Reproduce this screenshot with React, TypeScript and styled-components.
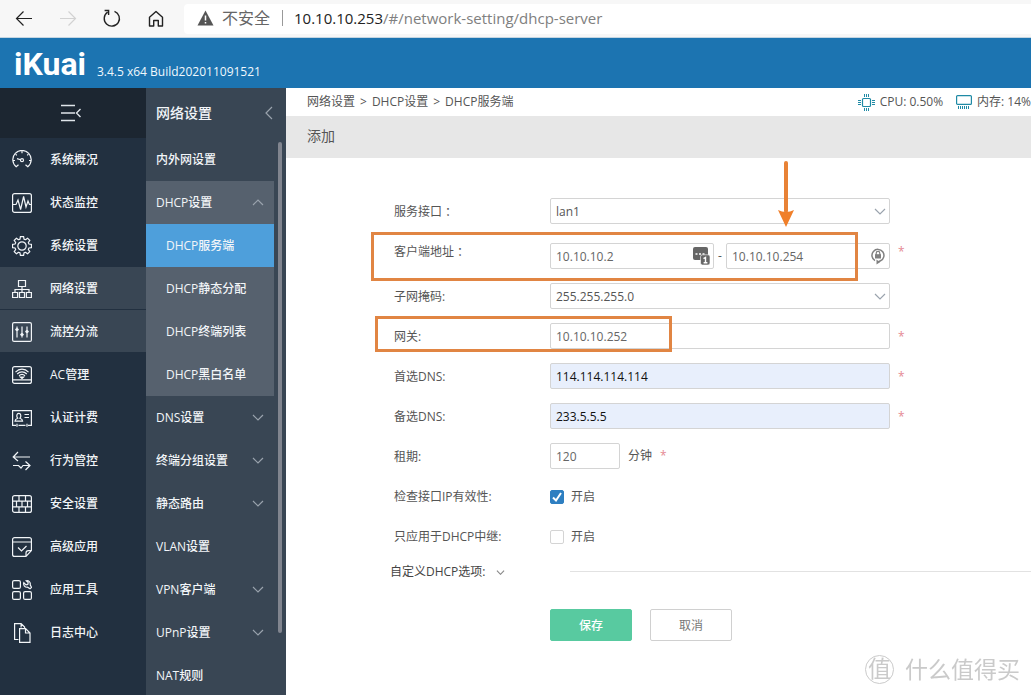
import React, { useState } from "react";
import styled, { createGlobalStyle } from "styled-components";

const Global = createGlobalStyle`
  *, *::before, *::after { box-sizing: border-box; }
  body {
    margin: 0;
    background: #fff;
    color: #555;
    font: 12px/20px "Open Sans", "Noto Sans CJK SC", sans-serif;
  }
  button, input, select { font: inherit; color: inherit; }
  a { color: inherit; text-decoration: none; }
`;

/* ---------- browser chrome ---------- */

const Page = styled.div`
  display: flex;
  flex-direction: column;
  height: 100vh;
  overflow: hidden;
`;

const BrowserBar = styled.div`
  display: flex;
  flex: none;
  align-items: center;
  height: 38px;
  padding-left: 14px;
  background: #f7f7f7;
  border-bottom: 1px solid #c5d6e2;
`;

const NavButton = styled.button<{ $dim?: boolean }>`
  display: flex;
  flex: none;
  width: 44px;
  padding: 0;
  border: 0;
  background: none;
  color: ${(p) => (p.$dim ? "#d2d2d2" : "#222")};
`;

const NavGroup = styled.div`
  display: flex;
  width: 170px;
  flex: none;
`;

const Address = styled.div`
  display: flex;
  flex: 1;
  align-items: center;
  height: 30px;
  padding: 0 0 2px 13px;
  border-radius: 4px 0 0 4px;
  background: #fff;
  color: #808080;
  font-size: 15px;
  white-space: nowrap;
`;

const Insecure = styled.span`
  margin-left: 8px;
  padding-right: 12px;
  border-right: 1px solid #999;
  margin-right: 11px;
  font-size: 16px;
  line-height: 16px;
  color: #666;
`;

const Host = styled.span`
  color: #222;
`;

/* ---------- header ---------- */

const Header = styled.header`
  display: flex;
  flex: none;
  align-items: flex-end;
  height: 50px;
  padding: 0 14px 6px;
  gap: 11px;
  background: #1c74b1;
  color: #fff;
`;

const Logo = styled.span`
  font: 700 32px/36px Roboto, sans-serif;
`;

const Version = styled.span`
  color: #f0f8fd;
`;

const Body = styled.div`
  display: flex;
  flex: 1;
  min-height: 0;
`;

/* ---------- primary menu ---------- */

const Sidebar = styled.nav`
  flex: none;
  width: 146px;
  background: #223040;
  color: #f2f5f8;
  font-weight: 500;
`;

const Collapse = styled.button`
  display: flex;
  align-items: center;
  justify-content: center;
  width: 100%;
  height: 50px;
  padding: 0 4px 0 0;
  border: 0;
  background: #1c2631;
  color: #dfe5ea;
`;

const SideItem = styled.a<{ $on?: boolean }>`
  display: flex;
  align-items: center;
  gap: 18px;
  height: 43px;
  padding-left: 12px;
  background: ${(p) => (p.$on ? "#394654" : "transparent")};
  box-shadow: inset 0 -1px #223040;
`;

/* ---------- secondary menu ---------- */

const SubMenu = styled.nav`
  flex: none;
  width: 140px;
  overflow: hidden;
  background: #394654;
  color: #f2f5f8;
  font-weight: 500;
`;

const SubHeader = styled.div`
  display: flex;
  align-items: center;
  justify-content: space-between;
  height: 50px;
  padding: 0 13px 0 10px;
  font-size: 14px;
  color: #f2f5f8;
`;

const SubBody = styled.div`
  display: flex;
  gap: 4px;
`;

const SubList = styled.div`
  width: 128px;
`;

const ScrollThumb = styled.div`
  width: 4px;
  height: 491px;
  margin-top: 4px;
  border-radius: 2px;
  background: #81858f;
`;

const SubItem = styled.a<{ $kind?: "open" | "child" | "active" }>`
  display: flex;
  align-items: center;
  justify-content: space-between;
  height: 43px;
  padding: 0 10px;
  padding-left: ${(p) => (p.$kind === "child" || p.$kind === "active" ? 20 : 10)}px;
  background: ${(p) =>
    p.$kind === "active" ? "#4e9fdb" : p.$kind ? "#56616e" : "transparent"};
`;

/* ---------- content ---------- */

const Main = styled.main`
  flex: 1;
  min-width: 0;
  overflow: hidden;
`;

const Crumbs = styled.div`
  display: flex;
  align-items: center;
  height: 28px;
  padding-left: 21px;
  gap: 5px;
  white-space: nowrap;
`;

const Stats = styled.div`
  display: flex;
  align-items: center;
  gap: 13px;
  margin-left: auto;
`;

const Stat = styled.span`
  display: flex;
  align-items: center;
  gap: 5px;
`;

const Title = styled.h1`
  margin: 0;
  padding: 0 0 2px 21px;
  background: #e7e7e7;
  font-size: 14px;
  font-weight: 400;
  line-height: 40px;
`;

const Form = styled.form`
  padding: 33px 0 0 108px;
`;

const Row = styled.div`
  position: relative;
  display: flex;
  height: 40px;
  line-height: 42px;
`;

const TallRow = styled(Row)`
  height: 45px;
`;

const Label = styled.label`
  flex: none;
  width: 156px;
`;

const Control = styled.div`
  display: flex;
  align-items: center;
  flex: none;
  width: 340px;
  line-height: 20px;
`;

const RangeControl = styled(Control)`
  padding-top: 5px;
`;

const Field = styled.div<{ $short?: boolean }>`
  position: relative;
  display: flex;
  align-items: center;
  flex: ${(p) => (p.$short ? "none" : 1)};
  width: ${(p) => (p.$short ? "70px" : "auto")};
  min-width: 0;
`;

const Input = styled.input<{ $filled?: boolean }>`
  width: 100%;
  height: 26px;
  padding: 0 5px;
  border: 1px solid #d4d4d4;
  border-radius: 2px;
  outline: 0;
  background: ${(p) => (p.$filled ? "#e8effc" : "#fff")};
  color: ${(p) => (p.$filled ? "#111" : "#666")};
`;

const Select = styled.select`
  width: 100%;
  height: 26px;
  padding: 2px 5px 0;
  border: 1px solid #d4d4d4;
  border-radius: 2px;
  outline: 0;
  appearance: none;
  background: #fff;
  color: #555;
`;

const Adornment = styled.span`
  position: absolute;
  right: 4px;
  display: flex;
  pointer-events: none;
`;

const Dash = styled.span`
  width: 12px;
  text-align: center;
`;

const Required = styled.span`
  margin-left: 8px;
  color: #e58a93;
`;

const Unit = styled.span`
  margin-left: 8px;
`;

const CheckLabel = styled.label`
  display: flex;
  align-items: center;
  gap: 7px;
  padding-top: 1px;
`;

const CheckBox = styled.span`
  position: relative;
  display: flex;
`;

const Check = styled.input`
  width: 14px;
  height: 14px;
  margin: 0;
  border: 1px solid #d4d4d4;
  border-radius: 2px;
  appearance: none;
  background: #fff;
  &:checked { border-color: #2e7fc1; background: #2e7fc1; }
`;

const Tick = styled.svg`
  position: absolute;
  inset: 0;
  pointer-events: none;
`;

const Custom = styled.div`
  display: flex;
  align-items: center;
  height: 30px;
  margin-left: -4px;
`;

const CustomToggle = styled.button`
  display: flex;
  align-items: center;
  gap: 10px;
  width: 180px;
  padding: 2px 0 0;
  border: 0;
  background: none;
  color: #444;
`;

const Rule = styled.hr`
  flex: 1;
  margin: 0;
  border: 0;
  border-top: 1px solid #e2e2e2;
`;

const Actions = styled.div`
  display: flex;
  gap: 18px;
  padding: 23px 0 0 156px;
`;

const Action = styled.button<{ $primary?: boolean }>`
  width: 82px;
  height: 32px;
  padding: 2px 0 0;
  border: 1px solid ${(p) => (p.$primary ? "#58caa0" : "#d0d0d0")};
  border-radius: 2px;
  background: ${(p) => (p.$primary ? "#58caa0" : "#fff")};
  color: ${(p) => (p.$primary ? "#fff" : "#777")};
  font-weight: ${(p) => (p.$primary ? 500 : 400)};
`;

/* ---------- marks drawn over the page ---------- */

const Highlight = styled.span<{ $left: number; $top: number; $w: number; $h: number }>`
  position: absolute;
  left: ${(p) => p.$left}px;
  top: ${(p) => p.$top}px;
  width: ${(p) => p.$w}px;
  height: ${(p) => p.$h}px;
  border: 3px solid #e18543;
  pointer-events: none;
`;

const Arrow = styled.svg`
  position: absolute;
  left: 384px;
  top: -71px;
  pointer-events: none;
`;

const Watermark = styled.div`
  position: fixed;
  right: 11px;
  bottom: 9px;
  display: flex;
  align-items: center;
  gap: 11px;
  color: #cacaca;
  font-size: 23px;
  line-height: 34px;
`;

const Seal = styled.span`
  width: 29px;
  height: 29px;
  border: 1px solid #cacaca;
  border-radius: 50%;
  text-align: center;
  font-size: 23px;
  line-height: 25px;
`;

/* ---------- icons ---------- */

const Icon = ({ children, w = 20, h = 20, sw = 1.2 }: { children: React.ReactNode; w?: number; h?: number; sw?: number }) => (
  <svg width={w} height={h} viewBox={`0 0 ${w} ${h}`} fill="none" stroke="currentColor" strokeWidth={sw} aria-hidden="true">
    {children}
  </svg>
);

const Chevron = ({ up, small }: { up?: boolean; small?: boolean }) => (
  <svg width={small ? 9 : 12} height={small ? 5 : 7} viewBox="0 0 12 7" fill="none" stroke={small ? "#888" : "#9aa3ad"} strokeWidth={small ? 1.6 : 1.2} aria-hidden="true">
    <path d={up ? "M1 6 6 1l5 5" : "M1 1l5 5 5-5"} />
  </svg>
);

const gearPath = () => {
  const pts: string[] = [];
  for (let i = 0; i < 8; i++) {
    const a = (i * Math.PI) / 4 - Math.PI / 2;
    const at = (r: number, d: number) =>
      `${(10 + r * Math.cos(a + d)).toFixed(2)} ${(10 + r * Math.sin(a + d)).toFixed(2)}`;
    pts.push(at(7.2, -0.28), at(9.6, -0.17), at(9.6, 0.17), at(7.2, 0.28));
  }
  return `M${pts.join("L")}Z`;
};

const sideItems: { name: string; on?: boolean; icon: React.ReactNode }[] = [
  {
    name: "系统概况",
    icon: (
      <>
        <path d="M6.5 14.8 4.2 16.8A9.2 9.2 0 1 1 15.800 16.800L13.500 14.800" />
        <path d="M10 1v2.200M3.600 4.200l1.200 1.200M16.400 4.200l-1.200 1.200M1 10.500h2M17 10.500h2M5 8.600l3.600 1.200" />
        <circle cx="10" cy="10.200" r="1.500" />
      </>
    ),
  },
  {
    name: "状态监控",
    icon: (
      <>
        <rect x=".6" y=".6" width="18.8" height="18.8" rx="2" />
        <path d="M1 11.500h3l2-4.500 2.600 9.500 3-13 2.400 10.500 2-6 1.400 3.500H19" />
      </>
    ),
  },
  { name: "系统设置", icon: (<><path d={gearPath()} strokeLinejoin="round" /><circle cx="10" cy="10" r="4.2" /></>) },
  {
    name: "网络设置",
    on: true,
    icon: <path d="M6.5 1.5h7v6h-7zM10 7.5v3M3 13.5v-3h14v3M10 10.5v3M.6 13.5h5v5h-5zM7.5 13.5h5v5h-5zM14.4 13.5h5v5h-5z" />,
  },
  {
    name: "流控分流",
    on: true,
    icon: (
      <>
        <rect x=".6" y=".6" width="18.8" height="18.8" rx="1.5" />
        <path d="M5 4.5v11M10 4.5v11M15 4.5v11M3.5 7.5h3M8.5 12.5h3M13.5 9.5h3" />
        <circle cx="5" cy="7.5" r="1" /><circle cx="10" cy="12.5" r="1" /><circle cx="15" cy="9.5" r="1" />
      </>
    ),
  },
  {
    name: "AC管理",
    icon: (
      <>
        <rect x=".6" y="1.6" width="18.8" height="16.8" rx="2" />
        <path d="M1 14.800h18M3.500 7.200c3.800-4 9.200-4 13 0M5.200 9c2.800-2.800 6.800-2.800 9.600 0M7 10.800c1.800-1.700 4.200-1.700 6 0" />
        <path d="M8.500 12.200h3L10 13.400z" fill="currentColor" />
      </>
    ),
  },
  {
    name: "认证计费",
    icon: (
      <>
        <path d="M4 17.400H.6V2.600h18.800v14.800H16M6.500 17.400h7M5 15.800v3M15 15.800v3" />
        <path d="M3 13.200c0-2 1-2.400 2.600-3C4.200 8.600 4.600 5.400 6.800 5.400s2.600 3.200 1.200 4.800c1.600.6 2.600 1 2.600 3zM12.500 6.500h4.500M12.500 9.500h4.500" />
      </>
    ),
  },
  { name: "行为管控", icon: <path d="M18 6H1.500M6 1 1.200 6 6 10M1 14.500h5.500l2.500 2.500 2-2.500h7M13.500 10.500l4.500 4-4.500 4.500" /> },
  {
    name: "安全设置",
    icon: (
      <>
        <rect x=".6" y="1.600" width="18.800" height="16.800" rx="2" />
        <path d="M1 7.200h18M1 12.800h18M7 2v5M13.500 2v5M4.500 7v6M10 7v6M15.500 7v6M7 13v5M13.500 13v5" />
      </>
    ),
  },
  {
    name: "高级应用",
    icon: <path d="M19.400 13V2.600a2 2 0 0 0-2-2H2.600a2 2 0 0 0-2 2v14.800a2 2 0 0 0 2 2H14M1 5h18M6 10.500l3.500 3.500 5-5M14 19.400V16a2.400 2.400 0 0 1 2.400-2.400h3zz" />,
  },
  {
    name: "应用工具",
    icon: (
      <>
        <rect x=".6" y=".6" width="7.800" height="7.800" rx="1.500" />
        <rect x=".6" y="11.600" width="7.800" height="7.800" rx="1.500" />
        <rect x="11.600" y="11.600" width="7.800" height="7.800" rx="1.500" />
        <path d="M11.800 2.600 14 4.800l1.800-.4.400-1.800L14.200.800c2.400-.6 4.600 1.400 4 4l1.400 2.600-1.600 1.400-2.400-1.600c-2.600.4-4.600-2-3.800-4.600z" />
      </>
    ),
  },
  {
    name: "日志中心",
    icon: <path d="M6.500 16.500H2.600V.600h6.500l3.500 3.500v1.500M9.100.800v3.800M7.600 5.600h6l4.400 4.400v9.400H7.600zM13.500 5.800V10H18" />,
  },
];

type Sub = { name: string; kind?: "open" | "child" | "active"; arrow?: boolean };
const subItems: Sub[] = [
  { name: "内外网设置" },
  { name: "DHCP设置", kind: "open", arrow: true },
  { name: "DHCP服务端", kind: "active" },
  { name: "DHCP静态分配", kind: "child" },
  { name: "DHCP终端列表", kind: "child" },
  { name: "DHCP黑白名单", kind: "child" },
  { name: "DNS设置", arrow: true },
  { name: "终端分组设置", arrow: true },
  { name: "静态路由", arrow: true },
  { name: "VLAN设置" },
  { name: "VPN客户端", arrow: true },
  { name: "UPnP设置", arrow: true },
  { name: "NAT规则" },
];

const KeypadIcon = () => (
  <svg width="17" height="18" viewBox="0 0 17 18" aria-hidden="true">
    <rect x="0" y="0" width="15" height="13" rx="2" fill="#666" />
    <path d="M2.500 7h2M6 7h2M9.500 7h2" stroke="#fff" strokeWidth="1.600" />
    <rect x="7.500" y="7.800" width="9.500" height="10.200" rx="2" fill="#666" stroke="#fff" strokeWidth=".6" />
    <path d="M10.500 11.600l2-1.200v5.400M10.600 15.800h3.800" stroke="#fff" strokeWidth="1.400" fill="none" />
  </svg>
);

const LockIcon = () => (
  <svg width="16" height="18" viewBox="0 0 16 18" fill="none" stroke="#808080" strokeWidth="1.500" aria-hidden="true">
    <path d="M5 13.600A6 6 0 1 1 10.500 13.800L8 15" />
    <path d="M6.500 12.600 10 15.200 6.500 17.600z" fill="#808080" stroke="none" />
    <rect x="5" y="7.200" width="6" height="4.300" fill="#808080" stroke="none" />
    <path d="M6.200 8V6.200a1.800 1.800 0 0 1 3.600 0V8" strokeWidth="1.200" />
  </svg>
);

function CheckRow({ id, label, initial }: { id: string; label: string; initial: boolean }) {
  const [on, setOn] = useState(initial);
  return (
    <Row>
      <Label htmlFor={id}>{label}</Label>
      <Control>
        <CheckLabel>
          <CheckBox>
            <Check id={id} type="checkbox" checked={on} onChange={() => setOn(!on)} />
            {on && (
              <Tick width="14" height="14" viewBox="0 0 14 14" fill="none" stroke="#fff" strokeWidth="2">
                <path d="M3 7.500 6 10.500 11 3" />
              </Tick>
            )}
          </CheckBox>
          开启
        </CheckLabel>
      </Control>
    </Row>
  );
}

export default function App() {
  return (
    <Page>
      <Global />
      <BrowserBar>
        <NavGroup>
          <NavButton aria-label="后退"><Icon><path d="M18 9.500H2.500M9.500 2.500l-7 7 7 7" /></Icon></NavButton>
          <NavButton aria-label="前进" $dim><Icon><path d="M2 9.500h15.500M10.500 2.500l7 7-7 7" /></Icon></NavButton>
          <NavButton aria-label="刷新"><Icon sw={1.4}><path d="M12.500 2.400A7.600 7.600 0 1 1 5.600 3.200M2.600 1.500h4v4.500" /></Icon></NavButton>
          <NavButton aria-label="主页"><Icon sw={1.4}><path d="M3.500 8.200V17h4.200v-5.500h4.600V17h4.200V8.200L10 2.500z" strokeLinejoin="round" /></Icon></NavButton>
        </NavGroup>
        <Address>
          <svg width="17" height="16" viewBox="0 0 17 16" aria-hidden="true">
            <path d="M8.500.500 16.500 15.500H.500z" fill="#555" />
            <path d="M8.500 5.500v5M8.500 12v1.600" stroke="#fff" strokeWidth="1.500" />
          </svg>
          <Insecure>不安全</Insecure>
          <Host>10.10.10.253</Host>/#/network-setting/dhcp-server
        </Address>
      </BrowserBar>

      <Header>
        <Logo>iKuai</Logo>
        <Version>3.4.5 x64 Build202011091521</Version>
      </Header>

      <Body>
        <Sidebar>
          <Collapse aria-label="收起菜单">
            <Icon w={22} h={18} sw={1.4}><path d="M1 1.500h14M1 9h14M1 16.500h14M20.500 5l-4 4 4 4" /></Icon>
          </Collapse>
          {sideItems.map((s) => (
            <SideItem key={s.name} href="#" $on={s.on}>
              <Icon>{s.icon}</Icon>
              {s.name}
            </SideItem>
          ))}
        </Sidebar>

        <SubMenu>
          <SubHeader>
            网络设置
            <Icon w={8} h={14} sw={1.2}><path d="M7 1 1 7l6 6" stroke="#9aa3ad" /></Icon>
          </SubHeader>
          <SubBody>
            <SubList>
              {subItems.map((s) => (
                <SubItem key={s.name} href="#" $kind={s.kind}>
                  {s.name}
                  {s.arrow && <Chevron up={s.kind === "open"} />}
                </SubItem>
              ))}
            </SubList>
            <ScrollThumb />
          </SubBody>
        </SubMenu>

        <Main>
          <Crumbs>
            <a href="#">网络设置</a>&gt;<a href="#">DHCP设置</a>&gt;<span>DHCP服务端</span>
            <Stats>
              <Stat>
                <svg width="17" height="17" viewBox="0 0 17 17" fill="none" stroke="#1f8aa5" aria-hidden="true">
                  <rect x="4.500" y="4.500" width="8" height="8" rx="1" strokeWidth="1.200" />
                  <path d="M6.500 0v3M8.500 0v3M10.500 0v3M6.500 14v3M8.500 14v3M10.500 14v3M0 6.500h3M0 8.500h3M0 10.500h3M14 6.500h3M14 8.500h3M14 10.500h3" />
                </svg>
                CPU: 0.50%
              </Stat>
              <Stat>
                <svg width="16" height="14" viewBox="0 0 16 14" fill="none" stroke="#1f8aa5" aria-hidden="true">
                  <rect x=".6" y=".6" width="14.800" height="8.800" rx="1" strokeWidth="1.200" />
                  <path d="M2.500 11v3M4.500 11v3M6.500 11v3M8.500 11v3M10.500 11v3M12.500 11v3" />
                </svg>
                内存: 14%
              </Stat>
            </Stats>
          </Crumbs>
          <Title>添加</Title>

          <Form onSubmit={(e) => e.preventDefault()}>
            <Row>
              <Label htmlFor="iface">服务接口 ：</Label>
              <Control>
                <Field>
                  <Select id="iface"><option>lan1</option></Select>
                  <Adornment><Chevron /></Adornment>
                </Field>
              </Control>
            </Row>

            <TallRow>
              <Label htmlFor="from">客户端地址 ：</Label>
              <RangeControl>
                <Field>
                  <Input id="from" defaultValue="10.10.10.2" />
                  <Adornment><KeypadIcon /></Adornment>
                </Field>
                <Dash>-</Dash>
                <Field>
                  <Input aria-label="结束地址" defaultValue="10.10.10.254" />
                  <Adornment><LockIcon /></Adornment>
                </Field>
              </RangeControl>
              <Required>*</Required>
              <Highlight $left={-23} $top={1} $w={487} $h={49} />
              <Arrow width="16" height="68" viewBox="0 0 16 68">
                <path d="M8 3v48" stroke="#e88236" strokeWidth="4" strokeLinecap="round" />
                <path d="M0 50q8 4 16 0L8 67z" fill="#f07f2a" />
              </Arrow>
            </TallRow>

            <Row>
              <Label htmlFor="mask">子网掩码:</Label>
              <Control>
                <Field>
                  <Select id="mask"><option>255.255.255.0</option></Select>
                  <Adornment><Chevron /></Adornment>
                </Field>
              </Control>
            </Row>

            <Row>
              <Label htmlFor="gw">网关:</Label>
              <Control><Field><Input id="gw" defaultValue="10.10.10.252" /></Field></Control>
              <Required>*</Required>
              <Highlight $left={-19} $top={0} $w={297} $h={36} />
            </Row>

            <Row>
              <Label htmlFor="dns1">首选DNS:</Label>
              <Control><Field><Input id="dns1" $filled defaultValue="114.114.114.114" /></Field></Control>
              <Required>*</Required>
            </Row>

            <Row>
              <Label htmlFor="dns2">备选DNS:</Label>
              <Control><Field><Input id="dns2" $filled defaultValue="233.5.5.5" /></Field></Control>
              <Required>*</Required>
            </Row>

            <Row>
              <Label htmlFor="lease">租期:</Label>
              <Control>
                <Field $short><Input id="lease" defaultValue="120" /></Field>
                <Unit>分钟</Unit>
                <Required>*</Required>
              </Control>
            </Row>

            <CheckRow id="check" label="检查接口IP有效性:" initial />
            <CheckRow id="relay" label="只应用于DHCP中继:" initial={false} />

            <Custom>
              <CustomToggle type="button">自定义DHCP选项: <Chevron small /></CustomToggle>
              <Rule />
            </Custom>

            <Actions>
              <Action type="submit" $primary>保存</Action>
              <Action type="button">取消</Action>
            </Actions>
          </Form>
        </Main>
      </Body>

      <Watermark>
        <Seal>值</Seal>
        什么值得买
      </Watermark>
    </Page>
  );
}
